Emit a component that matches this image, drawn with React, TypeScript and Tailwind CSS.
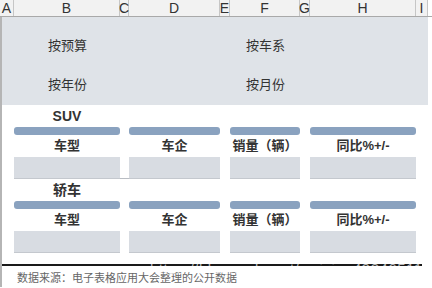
const cols = "grid grid-cols-[14px_106px_9px_91px_10px_70px_10px_106px_12px_4px]";

const headers = ["车型", "车企", "销量（辆）", "同比%+/-"];

function ColumnLetters() {
  const letters = ["A", "B", "C", "D", "E", "F", "G", "H", "I"];
  return (
    <div className={`${cols} h-[17px] border-b border-[#a9a9a9] bg-[#f2f2f2]`}>
      {letters.map((l) => (
        <div
          key={l}
          className="flex items-center justify-center border-r border-[#c6c6c6] text-[14px] leading-none text-[#333]"
        >
          {l}
        </div>
      ))}
      <div className="bg-white" />
    </div>
  );
}

function Section({ title, line }: { title: string; line?: boolean }) {
  const spans = ["col-start-2", "col-start-4", "col-start-6", "col-start-8"];
  return (
    <div className="flex flex-col">
      <div className={`${cols} h-[22px]`}>
        <div className="col-start-2 flex items-center justify-center text-[14px] font-bold text-[#333]">
          {title}
        </div>
      </div>
      <div className={`${cols} h-[8px]`}>
        {spans.map((s) => (
          <div key={s} className={`${s} row-start-1 rounded-[3px] bg-[#8aa2bf]`} />
        ))}
      </div>
      <div className={`${cols} h-[22px]`}>
        {headers.map((h, i) => (
          <div
            key={h}
            className={`${spans[i]} row-start-1 flex items-center justify-center text-[13px] font-bold text-[#333]`}
          >
            {h}
          </div>
        ))}
      </div>
      <div className={`${cols} h-[22px]`}>
        {spans.map((s) => (
          <div key={s} className={`${s} row-start-1 border-b border-[#c4c8ce] bg-[#d8dce2]`} />
        ))}
        {line ? <div className="col-start-3 row-start-1 border-b border-[#b9bdc3]" /> : null}
      </div>
    </div>
  );
}

export default function App() {
  return (
    <div
      className="relative h-[288px] w-[432px] overflow-hidden bg-white"
      style={{ fontFamily: '"Liberation Sans", "Noto Sans CJK SC", sans-serif' }}
    >
      <ColumnLetters />
      <div className="flex border-l-2 border-[#b5b5b5]">
        <div className="flex w-[426px] flex-col">
          <div className="flex h-[88px] flex-col gap-[19px] bg-[#dfe3e8] pt-[19px] text-[13px] text-[#333]">
            <div className="flex">
              <span className="ml-[46px] w-[198px]">按预算</span>
              <span>按车系</span>
            </div>
            <div className="flex">
              <span className="ml-[46px] w-[198px]">按年份</span>
              <span>按月份</span>
            </div>
          </div>
          <div className="-ml-[2px]">
            <Section title="SUV" line />
            <Section title="轿车" />
          </div>
          <div className="mt-[11px] h-[2px] w-[420px] bg-[#1a1a1a]" />
          <div className="pl-[15px] pt-[4px] text-[11px] text-[#666]">
            数据来源：电子表格应用大会整理的公开数据
          </div>
        </div>
      </div>
      <div className="absolute left-[150px] top-[258px] text-[15px] tracking-[0.5px] text-white/70">
        https://blog.csdn.net/weixin_49346511
      </div>
    </div>
  );
}
